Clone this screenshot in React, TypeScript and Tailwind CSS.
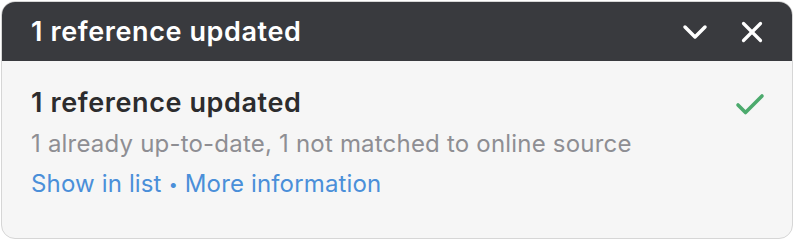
import { ChevronDown, X, Check } from "lucide-react";

const App = () => {
  return (
    <div className="w-[794px] h-[240px] bg-white p-px" style={{ fontFamily: "Inter, 'Noto Sans', sans-serif" }}>
      <div className="h-full flex flex-col rounded-[14px] border border-[#d6d6d6] overflow-hidden bg-[#f6f6f6]">
        {/* Header */}
        <div className="h-[59px] shrink-0 bg-[#393a3e] flex items-center justify-between pl-[29px] pr-[23px]">
          <span className="text-white text-[27px] leading-[32px] font-semibold tracking-[0.6px]">1 reference updated</span>
          <div className="flex items-center gap-[20px]">
            <ChevronDown className="w-[40px] h-[40px] text-white" strokeWidth={2.1} />
            <X className="w-[34px] h-[34px] text-white" strokeWidth={2.3} />
          </div>
        </div>

        {/* Body */}
        <div className="flex justify-between items-start pl-[29px] pr-[24px] pt-[22px]">
          <div className="flex flex-col">
            <p className="text-[27px] leading-[40px] font-semibold tracking-[0.6px] text-[#2c2c2e]">1 reference updated</p>
            <p className="mt-px text-[24px] leading-[40px] tracking-[0.2px] text-[#8e8e93]">
              1 already up-to-date, 1 not matched to online source
            </p>
            <p className="text-[24px] leading-[40px] tracking-[0.15px] text-[#4a8fd9]">
              <span>Show in list</span>
              <span className="mx-[7px] text-[16px] align-[2px]">•</span>
              <span>More information</span>
            </p>
          </div>
          <Check className="w-[36px] h-[36px] text-[#4caa6d] mt-[4px]" strokeWidth={2.4} />
        </div>
      </div>
    </div>
  );
};

export default App;
